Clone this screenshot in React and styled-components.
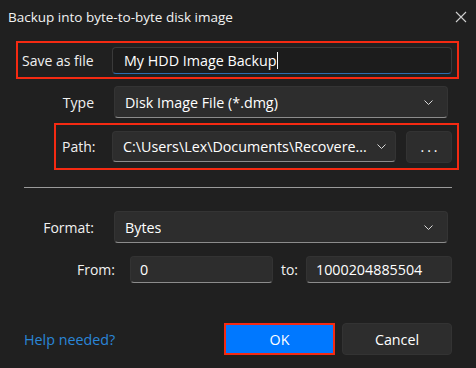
import React from "react";
import styled, { createGlobalStyle } from "styled-components";

const Global = createGlobalStyle`
  html, body {
    margin: 0;
    padding: 0;
    background: #202020;
  }
  body {
    font-family: "Open Sans", "Noto Sans", sans-serif;
    color: #ffffff;
  }
`;

const Dialog = styled.div`
  width: 476px;
  height: 368px;
  background: #202020;
  box-sizing: border-box;
  display: flex;
  flex-direction: column;
  overflow: hidden;
`;

const TitleBar = styled.div`
  height: 34px;
  display: flex;
  align-items: center;
  justify-content: space-between;
  padding: 0 9px 0 8px;
  font-size: 13.5px;
  color: #f2f2f2;
`;

const Body = styled.div`
  display: flex;
  flex-direction: column;
  padding: 7px 17px 0 0;
`;

const Highlight = styled.div`
  display: flex;
  align-items: center;
  box-sizing: border-box;
  border: 2px solid #f52a12;
  margin-top: ${(p) => p.$top || 0}px;
  margin-left: ${(p) => p.$left}px;
  height: ${(p) => p.$height}px;
  padding: 0 5px 0 ${(p) => p.$padLeft}px;
`;

const Row = styled.div`
  display: flex;
  align-items: center;
  margin-top: ${(p) => p.$top || 0}px;
  padding-right: ${(p) => p.$right || 0}px;
`;

const Label = styled.label`
  font-size: 14px;
  color: #f0f0f0;
  width: ${(p) => p.$width}px;
  text-align: ${(p) => p.$align || "right"};
  flex-shrink: 0;
  padding-right: ${(p) => p.$gap || 0}px;
  box-sizing: border-box;
`;

const TextInput = styled.div`
  flex: ${(p) => (p.$width ? "none" : 1)};
  width: ${(p) => (p.$width ? p.$width + "px" : "auto")};
  height: ${(p) => p.$height || 27}px;
  box-sizing: border-box;
  display: flex;
  align-items: center;
  padding-left: ${(p) => (p.$focused ? 11 : 9)}px;
  font-size: 14.3px;
  color: #ffffff;
  border-radius: 4px;
  background: ${(p) => (p.$focused ? "#1c1c1c" : "#2d2d2d")};
  border: 1px solid ${(p) => (p.$focused ? "#3a3a3a" : "#333333")};
  border-bottom: 1px solid ${(p) => (p.$focused ? "#2a6db0" : "#8c8c8c")};
`;

const Caret = styled.span`
  display: inline-block;
  width: 1px;
  height: 17px;
  background: #ffffff;
  margin-left: 1px;
`;

const Select = styled.div`
  flex: ${(p) => (p.$width ? "none" : 1)};
  width: ${(p) => (p.$width ? p.$width + "px" : "auto")};
  height: ${(p) => p.$height || 32}px;
  box-sizing: border-box;
  display: flex;
  align-items: center;
  justify-content: space-between;
  padding: 0 ${(p) => p.$padRight || 14}px 0 ${(p) => p.$padLeft || 10}px;
  font-size: 14.3px;
  color: #ffffff;
  background: #2d2d2d;
  border: 1px solid #343434;
  border-bottom: 1px solid #8c8c8c;
  border-radius: 4px;
  white-space: nowrap;
  overflow: hidden;
`;

const SelectText = styled.span`
  overflow: hidden;
  white-space: nowrap;
`;

const DotsButton = styled.button`
  width: 48px;
  height: 32px;
  margin-left: 10px;
  box-sizing: border-box;
  background: #2d2d2d;
  border: 1px solid #333333;
  border-radius: 4px;
  color: #ffffff;
  font-family: inherit;
  font-size: 14px;
  letter-spacing: 3px;
  padding: 0 0 0 3px;
`;

const Divider = styled.hr`
  margin: 17px 7px 0 24px;
  border: none;
  border-top: 1px solid #9a9a9a;
  height: 0;
`;

const Footer = styled.div`
  display: flex;
  align-items: center;
  margin-top: 40px;
  padding: 0 24px;
`;

const HelpLink = styled.a`
  font-size: 14.3px;
  color: #2a86d8;
  flex: 1;
  cursor: pointer;
`;

const Button = styled.button`
  width: ${(p) => p.$width}px;
  height: 32px;
  box-sizing: border-box;
  font-family: inherit;
  font-size: 14.3px;
  color: #ffffff;
  margin-left: ${(p) => p.$left || 0}px;
  background: ${(p) => (p.$primary ? "#0078ff" : "#2d2d2d")};
  border: ${(p) => (p.$primary ? "2px solid #f52a12" : "1px solid #333333")};
  border-radius: ${(p) => (p.$primary ? "0" : "4px")};
`;

function Chevron() {
  return (
    <svg width="9" height="5" viewBox="0 0 9 5" fill="none">
      <path d="M0.5 0.5l4 4 4-4" stroke="#d8d8d8" strokeWidth="1" />
    </svg>
  );
}

function CloseIcon() {
  return (
    <svg width="12" height="12" viewBox="0 0 12 12" fill="none">
      <path d="M1 1l10 10M11 1L1 11" stroke="#cfcfcf" strokeWidth="1.1" />
    </svg>
  );
}

export default function App() {
  return (
    <>
      <Global />
      <Dialog>
        <TitleBar>
          <span>Backup into byte-to-byte disk image</span>
          <CloseIcon />
        </TitleBar>
        <Body>
          <Highlight $left={16} $height={38} $padLeft={4}>
            <Label $width={90} $align="left">
              Save as file
            </Label>
            <TextInput $focused>
              My HDD Image Backup
              <Caret />
            </TextInput>
          </Highlight>

          <Row $top={7} $right={11}>
            <Label $width={114} $gap={20}>
              Type
            </Label>
            <Select>
              <SelectText>Disk Image File (*.dmg)</SelectText>
              <Chevron />
            </Select>
          </Row>

          <Highlight $top={5} $left={54} $height={47} $padLeft={6}>
            <Label $width={50} $align="left">
              Path:
            </Label>
            <Select $width={284} $height={31} $padRight={9} $padLeft={10}>
              <SelectText>C:\Users\Lex\Documents\Recovere...</SelectText>
              <Chevron />
            </Select>
            <DotsButton>...</DotsButton>
          </Highlight>

          <Divider />

          <Row $top={23} $right={11}>
            <Label $width={114} $gap={20}>
              Format:
            </Label>
            <Select>
              <SelectText>Bytes</SelectText>
              <Chevron />
            </Select>
          </Row>

          <Row $top={13} $right={7}>
            <Label $width={130} $gap={15}>
              From:
            </Label>
            <TextInput $width={143}>0</TextInput>
            <Label $width={33} $gap={8}>
              to:
            </Label>
            <TextInput>1000204885504</TextInput>
          </Row>
        </Body>
        <Footer>
          <HelpLink>Help needed?</HelpLink>
          <Button $primary $width={111}>
            OK
          </Button>
          <Button $width={110} $left={7}>
            Cancel
          </Button>
        </Footer>
      </Dialog>
    </>
  );
}
